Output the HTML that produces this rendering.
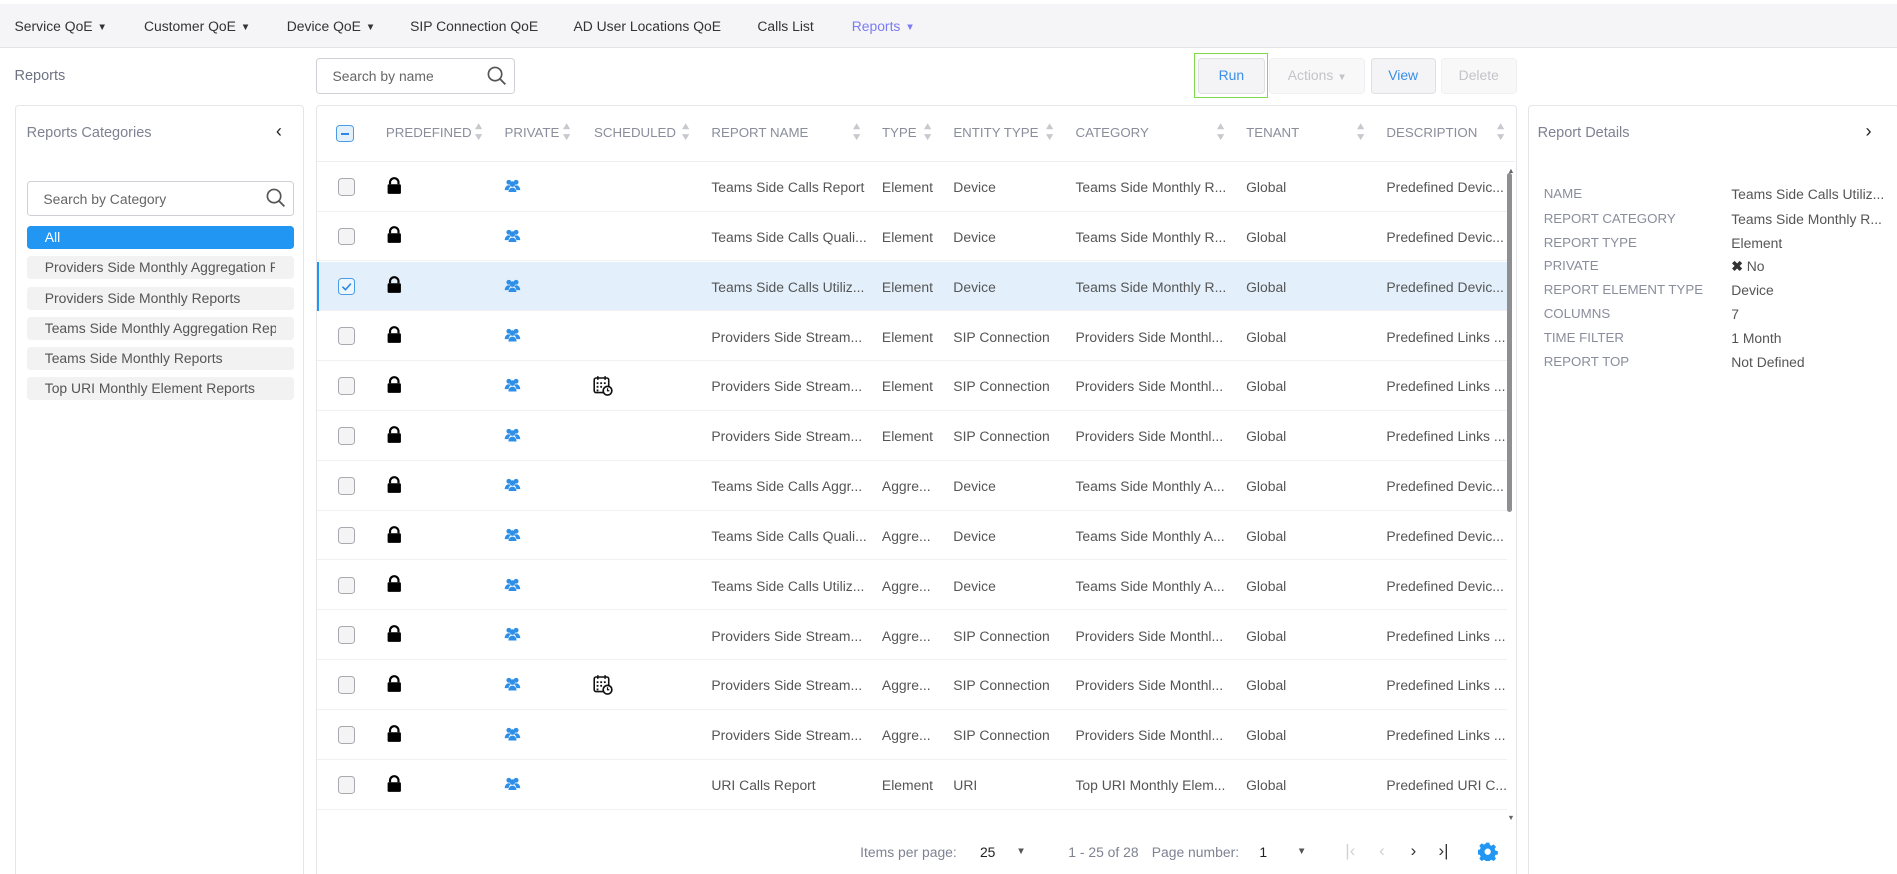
<!DOCTYPE html>
<html><head><meta charset="utf-8"><style>
html,body{margin:0;padding:0;width:1897px;height:874px;overflow:hidden;background:#fff}
#w{zoom:1.2098;width:1568px;height:723px;position:relative;font-family:"Liberation Sans",sans-serif;font-size:11.5px;color:#555}
.a{position:absolute}
.nav{left:0;top:3px;width:1568px;height:36px;background:#f5f5f7;border-bottom:1px solid #e4e4e8}
.nav>span{position:absolute;top:12px;color:#333;font-size:11.5px;white-space:nowrap}
.car{font-size:8px;margin-left:4px;vertical-align:1px}
.panel{background:#fff;border:1px solid #e6e6ea;border-radius:3px}
.inp{border:1px solid #cfd0d6;border-radius:3px;background:#fff;color:#666}
.btn{border:1px solid #e0e0e4;border-radius:3px;background:#f4f4f6;text-align:center;line-height:28px;height:28px;top:48px}
.cat{left:22px;width:206px;padding-left:15px;height:19px;background:#f2f2f3;border-radius:3px;line-height:19px;color:#555;white-space:nowrap;overflow:hidden}
.cat span{display:inline-block;overflow:hidden;vertical-align:top}
.hd{top:103px;color:#8a8d9c;font-size:11px;white-space:nowrap}
.row{left:262px;width:984px;height:40px;border-bottom:1px solid #f1f1f3}
.c{position:absolute;top:14px;white-space:nowrap;color:#555}
.cb{position:absolute;left:17px;top:13px;width:13px;height:13px;border:1px solid #a8a8ae;border-radius:3px;background:#f4f4f5}
.lab{left:1276px;color:#8a8d9c;font-size:11px}
.val{left:1431px;color:#555}
</style></head><body><div id="w">
<div class="a nav">
<span style="left:12px">Service QoE<span class="car">▼</span></span>
<span style="left:119px">Customer QoE<span class="car">▼</span></span>
<span style="left:237px">Device QoE<span class="car">▼</span></span>
<span style="left:339px">SIP Connection QoE</span>
<span style="left:474px">AD User Locations QoE</span>
<span style="left:626px">Calls List</span>
<span style="left:704px;color:#7b7bf2">Reports<span class="car">▼</span></span>
</div>
<div class="a" style="left:12px;top:56px;color:#6e7384;font-size:12px">Reports</div>
<div class="a inp" style="left:261px;top:48px;width:163px;height:28px"><span class="a" style="left:13px;top:7px">Search by name</span>
<svg class="a" style="left:140px;top:5px" width="18" height="18" viewBox="0 0 18 18"><circle cx="7.5" cy="7.5" r="5.5" fill="none" stroke="#555" stroke-width="1.4"/><line x1="11.5" y1="11.5" x2="16" y2="16" stroke="#555" stroke-width="1.5"/></svg></div>
<div class="a" style="left:987px;top:44px;width:61px;height:37px;border:1px solid #7ddc4e;box-sizing:border-box"></div>
<div class="a btn" style="left:990px;width:54px;color:#3a8ee6">Run</div>
<div class="a btn" style="left:1049px;width:78px;color:#c4c4c8;background:#f8f8f9;border-color:#f0f0f2">Actions <span style="font-size:8px">▼</span></div>
<div class="a btn" style="left:1133px;width:52px;color:#3a8ee6">View</div>
<div class="a btn" style="left:1191px;width:61px;color:#c4c4c8;background:#f8f8f9;border-color:#f0f0f2">Delete</div>

<div class="a panel" style="left:12px;top:87px;width:238px;height:640px"></div>
<div class="a" style="left:22px;top:103px;color:#7e8292;font-size:12px">Reports Categories</div>
<div class="a" style="left:228px;top:100px;font-size:15px;color:#222">‹</div>
<div class="a inp" style="left:22px;top:150px;width:219px;height:27px"><span class="a" style="left:13px;top:7px">Search by Category</span>
<svg class="a" style="left:196px;top:4px" width="18" height="18" viewBox="0 0 18 18"><circle cx="7.5" cy="7.5" r="5.5" fill="none" stroke="#555" stroke-width="1.4"/><line x1="11.5" y1="11.5" x2="16" y2="16" stroke="#555" stroke-width="1.5"/></svg></div>
<div class="a cat" style="top:187px;background:#2196f3;color:#fff">All</div>
<div class="a cat" style="top:212px"><span style="width:190px">Providers Side Monthly Aggregation Reports</span></div>
<div class="a cat" style="top:237px">Providers Side Monthly Reports</div>
<div class="a cat" style="top:262px"><span style="width:191px">Teams Side Monthly Aggregation Reports</span></div>
<div class="a cat" style="top:287px">Teams Side Monthly Reports</div>
<div class="a cat" style="top:312px">Top URI Monthly Element Reports</div>

<div class="a panel" style="left:261px;top:87px;width:991px;height:640px"></div>
<div class="a" style="left:262px;top:133px;width:990px;height:1px;background:#eeeef0"></div>
<div class="a" style="left:278px;top:103px;width:13px;height:13px;border:1px solid #4a9be8;border-radius:3px;background:#e3f0fb"><div style="position:absolute;left:3px;top:6px;width:7px;height:1.5px;background:#2f86e0"></div></div>
<div class="a hd" style="left:319px">PREDEFINED</div>
<div class="a hd" style="left:417px">PRIVATE</div>
<div class="a hd" style="left:491px">SCHEDULED</div>
<div class="a hd" style="left:588px">REPORT NAME</div>
<div class="a hd" style="left:729px">TYPE</div>
<div class="a hd" style="left:788px">ENTITY TYPE</div>
<div class="a hd" style="left:889px">CATEGORY</div>
<div class="a hd" style="left:1030px">TENANT</div>
<div class="a hd" style="left:1146px">DESCRIPTION</div>
<svg width="0" height="0" style="position:absolute"><defs>
<g id="so"><path d="M0 6 L3 1 L6 6Z M0 10 L3 15 L6 10Z" fill="#c8c9cf"/></g>
<g id="lk"><path d="M2.5 6 V4.5 A3.5 3.5 0 0 1 9.5 4.5 V6" fill="none" stroke="#000" stroke-width="1.8"/><rect x="0.5" y="6" width="11" height="8" rx="1" fill="#000"/></g>
<g id="pp" fill="#2f8fe6"><circle cx="4" cy="3.5" r="2"/><circle cx="10" cy="3.5" r="2"/><circle cx="7" cy="5" r="2.3"/><path d="M0.5 10 Q1 6 4 6 Q5 6 5.5 7 Q4 8 3.8 10Z M13.5 10 Q13 6 10 6 Q9 6 8.5 7 Q10 8 10.2 10Z M3.6 12 Q4 8 7 8 Q10 8 10.4 12Z"/></g>
<g id="cal"><rect x="1" y="2.5" width="12" height="12" rx="1.5" fill="none" stroke="#111" stroke-width="1.3"/><line x1="4" y1="1" x2="4" y2="4" stroke="#111" stroke-width="1.3"/><line x1="10" y1="1" x2="10" y2="4" stroke="#111" stroke-width="1.3"/><g fill="#111"><rect x="3" y="6" width="1.5" height="1.5"/><rect x="6" y="6" width="1.5" height="1.5"/><rect x="9" y="6" width="1.5" height="1.5"/><rect x="3" y="9" width="1.5" height="1.5"/><rect x="6" y="9" width="1.5" height="1.5"/><rect x="3" y="12" width="1.5" height="1.5"/></g><circle cx="12" cy="13" r="3.6" fill="#fff" stroke="#111" stroke-width="1.4"/><path d="M12 11 V13 H13.5" fill="none" stroke="#111" stroke-width="1"/></g>
</defs></svg>
<svg class="a" style="left:393px;top:101px" width="8" height="16"><use href="#so"/></svg>
<svg class="a" style="left:465px;top:101px" width="8" height="16"><use href="#so"/></svg>
<svg class="a" style="left:564px;top:101px" width="8" height="16"><use href="#so"/></svg>
<svg class="a" style="left:705px;top:101px" width="8" height="16"><use href="#so"/></svg>
<svg class="a" style="left:764px;top:101px" width="8" height="16"><use href="#so"/></svg>
<svg class="a" style="left:865px;top:101px" width="8" height="16"><use href="#so"/></svg>
<svg class="a" style="left:1006px;top:101px" width="8" height="16"><use href="#so"/></svg>
<svg class="a" style="left:1122px;top:101px" width="8" height="16"><use href="#so"/></svg>
<svg class="a" style="left:1237px;top:101px" width="8" height="16"><use href="#so"/></svg>

<div id="rows"></div>
<div class="a" style="left:1246px;top:137px;font-size:6px;color:#666">▲</div>
<div class="a" style="left:1246px;top:143px;width:4px;height:280px;background:#8f8f93;border-radius:2px"></div>
<div class="a" style="left:1246px;top:672px;font-size:6px;color:#666">▼</div>

<div class="a" style="left:711px;top:698px;color:#7e8292">Items per page:</div>
<div class="a" style="left:810px;top:698px;color:#222">25</div>
<div class="a" style="left:840px;top:699px;font-size:8px;color:#555">▼</div>
<div class="a" style="left:883px;top:698px;color:#7e8292">1 - 25 of 28</div>
<div class="a" style="left:952px;top:698px;color:#7e8292">Page number:</div>
<div class="a" style="left:1041px;top:698px;color:#222">1</div>
<div class="a" style="left:1072px;top:699px;font-size:8px;color:#555">▼</div>
<div class="a" style="left:1112px;top:695px;font-size:14px;color:#cfd0d4">|‹</div>
<div class="a" style="left:1140px;top:695px;font-size:14px;color:#cfd0d4">‹</div>
<div class="a" style="left:1166px;top:695px;font-size:14px;color:#333">›</div>
<div class="a" style="left:1189px;top:695px;font-size:14px;color:#333">›|</div>
<svg class="a" style="left:1222px;top:696px" width="16" height="16" viewBox="0 0 16 16"><path fill="#2196f3" d="M6.6 0.5h2.8l0.4 2 1.4 0.6 1.7-1.1 2 2-1.1 1.7 0.6 1.4 2 0.4v2.8l-2 0.4-0.6 1.4 1.1 1.7-2 2-1.7-1.1-1.4 0.6-0.4 2H6.6l-0.4-2-1.4-0.6-1.700 1.1-2-2 1.1-1.7-0.6-1.4-2-0.4V6.6l2-0.4 0.6-1.4-1.1-1.7 2-2 1.7 1.1 1.4-0.6z"/><circle cx="8" cy="8" r="2.6" fill="#fff"/></svg>

<div class="a panel" style="left:1263px;top:87px;width:305px;height:640px"></div>
<div class="a" style="left:1271px;top:103px;color:#7e8292;font-size:12px">Report Details</div>
<div class="a" style="left:1542px;top:100px;font-size:15px;color:#222">›</div>
<div class="a lab" style="top:154px">NAME</div><div class="a val" style="top:154px">Teams Side Calls Utiliz...</div>
<div class="a lab" style="top:174px">REPORT CATEGORY</div><div class="a val" style="top:174px">Teams Side Monthly R...</div>
<div class="a lab" style="top:194px">REPORT TYPE</div><div class="a val" style="top:194px">Element</div>
<div class="a lab" style="top:213px">PRIVATE</div><div class="a val" style="top:213px"><b style="color:#333">✖</b> No</div>
<div class="a lab" style="top:233px">REPORT ELEMENT TYPE</div><div class="a val" style="top:233px">Device</div>
<div class="a lab" style="top:253px">COLUMNS</div><div class="a val" style="top:253px">7</div>
<div class="a lab" style="top:273px">TIME FILTER</div><div class="a val" style="top:273px">1 Month</div>
<div class="a lab" style="top:293px">REPORT TOP</div><div class="a val" style="top:293px">Not Defined</div>
</div>
<script>
var d=[["Teams Side Calls Report","Element","Device","Teams Side Monthly R...","Predefined Devic...",0],
["Teams Side Calls Quali...","Element","Device","Teams Side Monthly R...","Predefined Devic...",0],
["Teams Side Calls Utiliz...","Element","Device","Teams Side Monthly R...","Predefined Devic...",0],
["Providers Side Stream...","Element","SIP Connection","Providers Side Monthl...","Predefined Links ...",0],
["Providers Side Stream...","Element","SIP Connection","Providers Side Monthl...","Predefined Links ...",1],
["Providers Side Stream...","Element","SIP Connection","Providers Side Monthl...","Predefined Links ...",0],
["Teams Side Calls Aggr...","Aggre...","Device","Teams Side Monthly A...","Predefined Devic...",0],
["Teams Side Calls Quali...","Aggre...","Device","Teams Side Monthly A...","Predefined Devic...",0],
["Teams Side Calls Utiliz...","Aggre...","Device","Teams Side Monthly A...","Predefined Devic...",0],
["Providers Side Stream...","Aggre...","SIP Connection","Providers Side Monthl...","Predefined Links ...",0],
["Providers Side Stream...","Aggre...","SIP Connection","Providers Side Monthl...","Predefined Links ...",1],
["Providers Side Stream...","Aggre...","SIP Connection","Providers Side Monthl...","Predefined Links ...",0],
["URI Calls Report","Element","URI","Top URI Monthly Elem...","Predefined URI C...",0]];
var h="";
d.forEach(function(r,i){var t=134+i*41.2;var sel=i==2;
h+='<div class="a row" style="top:'+t+'px;'+(sel?'background:#e3f0fb;':'')+'">'+(sel?'<div style="position:absolute;left:0;top:0;width:2px;height:41px;background:#2196f3"></div>':'')+
(sel?'<div class="cb" style="border-color:#4a9be8;background:#eef6fd"><svg style="position:absolute;left:1px;top:1px" width="11" height="11"><path d="M2 5.5 L4.5 8 L9 3" fill="none" stroke="#2f86e0" stroke-width="1.3"/></svg></div>':'<div class="cb"></div>')+
'<svg style="position:absolute;left:58px;top:12px" width="12" height="15"><use href="#lk"/></svg>'+
'<svg style="position:absolute;left:155px;top:13px" width="14" height="12"><use href="#pp"/></svg>'+
(r[5]?'<svg style="position:absolute;left:228px;top:11px" width="17" height="18"><use href="#cal"/></svg>':'')+
'<span class="c" style="left:326px">'+r[0]+'</span><span class="c" style="left:467px">'+r[1]+'</span><span class="c" style="left:526px">'+r[2]+'</span><span class="c" style="left:627px">'+r[3]+'</span><span class="c" style="left:768px">Global</span><span class="c" style="left:884px">'+r[4]+'</span></div>';});
document.getElementById("rows").outerHTML=h;
</script>
</body></html>
